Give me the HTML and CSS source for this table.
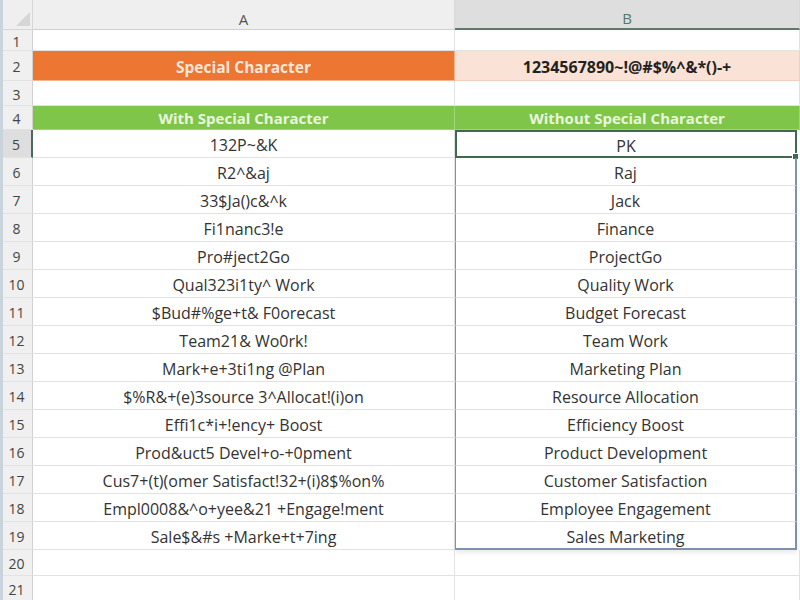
FILE: index.html
```html
<!DOCTYPE html>
<html>
<head>
<meta charset="utf-8">
<link rel="stylesheet" href="styles.css">
</head>
<body>
<div class="sheet">
  <div class="corner"><span class="tri"></span></div>
  <div class="colhead">A</div>
  <div class="colhead sel">B</div>

  <div class="rowhead r1">1</div><div class="cell"></div><div class="cell"></div>
  <div class="rowhead r2">2</div><div class="cell title">Special Character</div><div class="cell chars">1234567890~!@#$%^&amp;*()-+</div>
  <div class="rowhead r3">3</div><div class="cell"></div><div class="cell"></div>
  <div class="rowhead r4">4</div><div class="cell head">With Special Character</div><div class="cell head">Without Special Character</div>

  <div class="rowhead selrow">5</div><div class="cell">132P~&amp;K</div><div class="cell rng top active">PK<span class="handle"></span></div>
  <div class="rowhead">6</div><div class="cell">R2^&amp;aj</div><div class="cell rng">Raj</div>
  <div class="rowhead">7</div><div class="cell">33$Ja()c&amp;^k</div><div class="cell rng">Jack</div>
  <div class="rowhead">8</div><div class="cell">Fi1nanc3!e</div><div class="cell rng">Finance</div>
  <div class="rowhead">9</div><div class="cell">Pro#ject2Go</div><div class="cell rng">ProjectGo</div>
  <div class="rowhead">10</div><div class="cell">Qual323i1ty^ Work</div><div class="cell rng">Quality Work</div>
  <div class="rowhead">11</div><div class="cell">$Bud#%ge+t&amp; F0orecast</div><div class="cell rng">Budget Forecast</div>
  <div class="rowhead">12</div><div class="cell">Team21&amp; Wo0rk!</div><div class="cell rng">Team Work</div>
  <div class="rowhead">13</div><div class="cell">Mark+e+3ti1ng @Plan</div><div class="cell rng">Marketing Plan</div>
  <div class="rowhead">14</div><div class="cell">$%R&amp;+(e)3source 3^Allocat!(i)on</div><div class="cell rng">Resource Allocation</div>
  <div class="rowhead">15</div><div class="cell">Effi1c*i+!ency+ Boost</div><div class="cell rng">Efficiency Boost</div>
  <div class="rowhead">16</div><div class="cell">Prod&amp;uct5 Devel+o-+0pment</div><div class="cell rng">Product Development</div>
  <div class="rowhead">17</div><div class="cell">Cus7+(t)(omer Satisfact!32+(i)8$%on%</div><div class="cell rng">Customer Satisfaction</div>
  <div class="rowhead">18</div><div class="cell">Empl0008&amp;^o+yee&amp;21 +Engage!ment</div><div class="cell rng">Employee Engagement</div>
  <div class="rowhead">19</div><div class="cell">Sale$&amp;#s +Marke+t+7ing</div><div class="cell rng bottom">Sales Marketing</div>
  <div class="rowhead">20</div><div class="cell"></div><div class="cell"></div>
  <div class="rowhead">21</div><div class="cell"></div><div class="cell"></div>
</div>
</body>
</html>
```
FILE: styles.css
```css
html, body {
  margin: 0;
  padding: 0;
  background: #ffffff;
  overflow: hidden;
}
.sheet {
  display: grid;
  grid-template-columns: 30px 422px 345px;
  grid-template-rows: 30px 21px 30px 25px 24px repeat(15, 28px) 26px 26px;
  width: 800px;
  height: 600px;
  font-family: "Open Sans", "Liberation Sans", sans-serif;
  font-size: 16px;
  color: #333333;
  border-left: 3px solid #c9d3dc;
  box-sizing: border-box;
}
.corner {
  background: #efefef;
  border-bottom: 1px solid #d6d6d6;
  border-right: 1px solid #d6d6d6;
  position: relative;
}
.tri {
  position: absolute;
  right: 2px;
  bottom: 3px;
  width: 0;
  height: 0;
  border-left: 14px solid transparent;
  border-bottom: 14px solid #d6d6d6;
}
.colhead {
  background: #efefef;
  border-bottom: 1px solid #cfcfcf;
  border-right: 1px solid #d9d9d9;
  display: flex;
  align-items: center;
  justify-content: center;
  padding-top: 8px;
  box-sizing: border-box;
  color: #555555;
  font-size: 15px;
}
.colhead.sel {
  background: #dedede;
  border-bottom: 2px solid #5f7a6b;
  color: #4f7a63;
}
.rowhead {
  background: #f0f0f0;
  border-right: 1px solid #d2d2d2;
  border-bottom: 1px solid #e2e2e2;
  display: flex;
  align-items: center;
  justify-content: center;
  color: #444444;
  font-size: 14px;
  padding-right: 2px;
  padding-top: 2px;
}
.rowhead.selrow {
  background: #dedede;
  border-right: 2px solid #4b6a58;
}
.cell {
  border-bottom: 1px solid #e2e2e2;
  border-right: 1px solid #e2e2e2;
  display: flex;
  align-items: center;
  justify-content: center;
  white-space: nowrap;
  box-sizing: border-box;
  position: relative;
  padding-top: 3px;
}
.cell.title {
  background: #ec7632;
  color: #fbe7d8;
  font-weight: bold;
  font-size: 15.5px;
  border-color: #f4b490;
}
.cell.chars {
  background: #fbe2d6;
  color: #222222;
  font-weight: bold;
  font-size: 16px;
  border-color: #f0d0c0;
}
.cell.head {
  background: #7ec54a;
  color: #e9f6dc;
  font-weight: bold;
  font-size: 15px;
  border-color: #9fd478;
  padding-top: 1px;
}
.cell.rng {
  border-left: 1px solid #7d93ad;
  border-right: 2px solid #7d93ad;
  margin-right: 3px;
}
.cell.rng.bottom {
  border-bottom: 2px solid #7d93ad;
  box-shadow: 0 3px 4px rgba(0, 0, 0, 0.08);
}
.cell.active {
  border: 2px solid #3f6a50;
}
.handle {
  position: absolute;
  right: -4px;
  bottom: -4px;
  width: 5px;
  height: 5px;
  background: #3f6a50;
  border: 1px solid #ffffff;
}
```
